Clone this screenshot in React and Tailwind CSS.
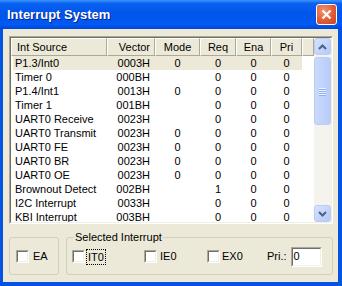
const rows = [
  ['P1.3/Int0', '0003H', '0', '0', '0', '0'],
  ['Timer 0', '000BH', '', '0', '0', '0'],
  ['P1.4/Int1', '0013H', '0', '0', '0', '0'],
  ['Timer 1', '001BH', '', '0', '0', '0'],
  ['UART0 Receive', '0023H', '', '0', '0', '0'],
  ['UART0 Transmit', '0023H', '0', '0', '0', '0'],
  ['UART0 FE', '0023H', '0', '0', '0', '0'],
  ['UART0 BR', '0023H', '0', '0', '0', '0'],
  ['UART0 OE', '0023H', '0', '0', '0', '0'],
  ['Brownout Detect', '002BH', '', '1', '0', '0'],
  ['I2C Interrupt', '0033H', '', '0', '0', '0'],
  ['KBI Interrupt', '003BH', '', '0', '0', '0'],
];

const cols = 'grid grid-cols-[96px_48px_45px_36px_35px_31px_1fr]';

function Check() {
  return (
    <span className="block w-[13px] h-[13px] shrink-0 border border-t-[#ACA899] border-l-[#ACA899] border-r-white border-b-white">
      <span className="block w-full h-full bg-white border border-t-[#716F64] border-l-[#716F64] border-r-[#F1EFE2] border-b-[#F1EFE2]" />
    </span>
  );
}

function Head({ children, className = '' }) {
  return (
    <div className={`h-[18px] flex items-center bg-[#ECE9D8] border-t border-l border-t-white border-l-white border-r border-b border-r-[#ACA899] border-b-[#ACA899] ${className}`}>
      {children}
    </div>
  );
}

function ScrollBtn({ up }) {
  return (
    <div className="h-[17px] w-[17px] rounded-[3px] border border-[#BACCF5] bg-gradient-to-br from-[#D6E3FE] to-[#B5C9F7] flex items-center justify-center">
      <svg width="9" height="6" viewBox="0 0 9 6">
        <path d={up ? 'M1 5 L4.5 1.5 L8 5' : 'M1 1 L4.5 4.5 L8 1'} fill="none" stroke="#4D6185" strokeWidth="2" />
      </svg>
    </div>
  );
}

export default function App() {
  return (
    <div className="w-[342px] h-[286px] flex flex-col bg-[#0553E1] font-['Liberation_Sans',Arial,sans-serif] text-[11px] text-black overflow-hidden">
      {/* Title bar */}
      <div className="h-[29px] shrink-0 flex items-center pl-[7px] pr-[5px] bg-[linear-gradient(to_bottom,#3D95FF_0%,#0A62F0_12%,#0055EA_45%,#0059F2_85%,#0046D8_100%)]">
        <span className="text-white font-bold text-[13px] [text-shadow:1px_1px_0_#0A1E8C]">Interrupt System</span>
        <div className="ml-auto w-[21px] h-[21px] rounded-[3px] border border-white bg-[radial-gradient(circle_at_35%_30%,#F29477_0%,#E15B34_55%,#C8441F_100%)] flex items-center justify-center">
          <svg width="11" height="11" viewBox="0 0 11 11">
            <path d="M1.5 1.5 L9.5 9.5 M9.5 1.5 L1.5 9.5" stroke="white" strokeWidth="2.2" />
          </svg>
        </div>
      </div>

      {/* Client area */}
      <div className="flex-1 ml-[3px] mr-[4px] mb-[4px] bg-[#ECE9D8] pt-[7px] pl-[6px] flex flex-col">
        {/* List view */}
        <div className="w-[324px] h-[188px] border border-t-[#ACA899] border-l-[#ACA899] border-r-white border-b-white">
          <div className="w-full h-full bg-white border border-t-[#716F64] border-l-[#716F64] border-r-[#F1EFE2] border-b-[#F1EFE2] flex overflow-hidden">
            <div className="flex-1 overflow-hidden">
              <div className={cols}>
                <Head className="pl-[5px]">Int Source</Head>
                <Head className="justify-end pr-[4px]">Vector</Head>
                <Head className="justify-center">Mode</Head>
                <Head className="justify-center">Req</Head>
                <Head className="justify-center">Ena</Head>
                <Head className="justify-center">Pri</Head>
                <Head />
              </div>
              {rows.map((r, i) => {
                const sel = i === 0 ? 'bg-[#ECE9D8]' : '';
                return (
                  <div key={r[0]} className={`${cols} h-[14px] leading-[14px]`}>
                    <div className={`ml-[2px] pl-[2px] whitespace-nowrap ${sel}`}>{r[0]}</div>
                    <div className={`text-right pr-[5px] ${sel}`}>{r[1]}</div>
                    <div className={`text-center ${sel}`}>{r[2]}</div>
                    <div className={`text-center ${sel}`}>{r[3]}</div>
                    <div className={`text-center ${sel}`}>{r[4]}</div>
                    <div className={`text-center ${sel}`}>{r[5]}</div>
                    <div />
                  </div>
                );
              })}
            </div>
            <div className="w-[17px] shrink-0 flex flex-col bg-[#F4F3EE]">
              <ScrollBtn up />
              <div className="mt-[2px] h-[68px] rounded-[3px] border border-[#BACCF5] bg-gradient-to-r from-[#C9DAFE] to-[#B8CCF8] flex flex-col items-center justify-center gap-[1px]">
                {[0, 1, 2, 3].map(k => (
                  <span key={k} className="block w-[7px] h-[1px] bg-[#EEF4FE] shadow-[0_1px_0_#8CB0F8]" />
                ))}
              </div>
              <div className="flex-1" />
              <ScrollBtn />
            </div>
          </div>
        </div>

        {/* Bottom group boxes */}
        <div className="flex items-end gap-[7px] mt-[7px]">
          <fieldset className="w-[50px] h-[38px] border border-[#D0D0BF] rounded-[3px] flex items-center pl-[6px]">
            <div className="flex items-center gap-[4px]">
              <Check />
              <span>EA</span>
            </div>
          </fieldset>
          <fieldset className="w-[267px] h-[44px] border border-[#D0D0BF] rounded-[3px] px-[5px]">
            <legend className="ml-[2px] px-[1px] leading-[13px]">Selected Interrupt</legend>
            <div className="flex items-center h-[25px]">
              <div className="w-[72px] flex items-center">
                <Check />
                <span className="ml-[1px] px-[1px] border border-dotted border-black leading-[14px]">IT0</span>
              </div>
              <div className="w-[63px] flex items-center gap-[3px]">
                <Check />
                <span>IE0</span>
              </div>
              <div className="w-[60px] flex items-center gap-[2px]">
                <Check />
                <span>EX0</span>
              </div>
              <span>Pri.:</span>
              <div className="ml-[4px] w-[31px] h-[20px] border border-t-[#ACA899] border-l-[#ACA899] border-r-white border-b-white">
                <div className="w-full h-full bg-white border border-t-[#716F64] border-l-[#716F64] border-r-[#F1EFE2] border-b-[#F1EFE2] pl-[1px] flex items-center">
                  0
                </div>
              </div>
            </div>
          </fieldset>
        </div>
      </div>
    </div>
  );
}
